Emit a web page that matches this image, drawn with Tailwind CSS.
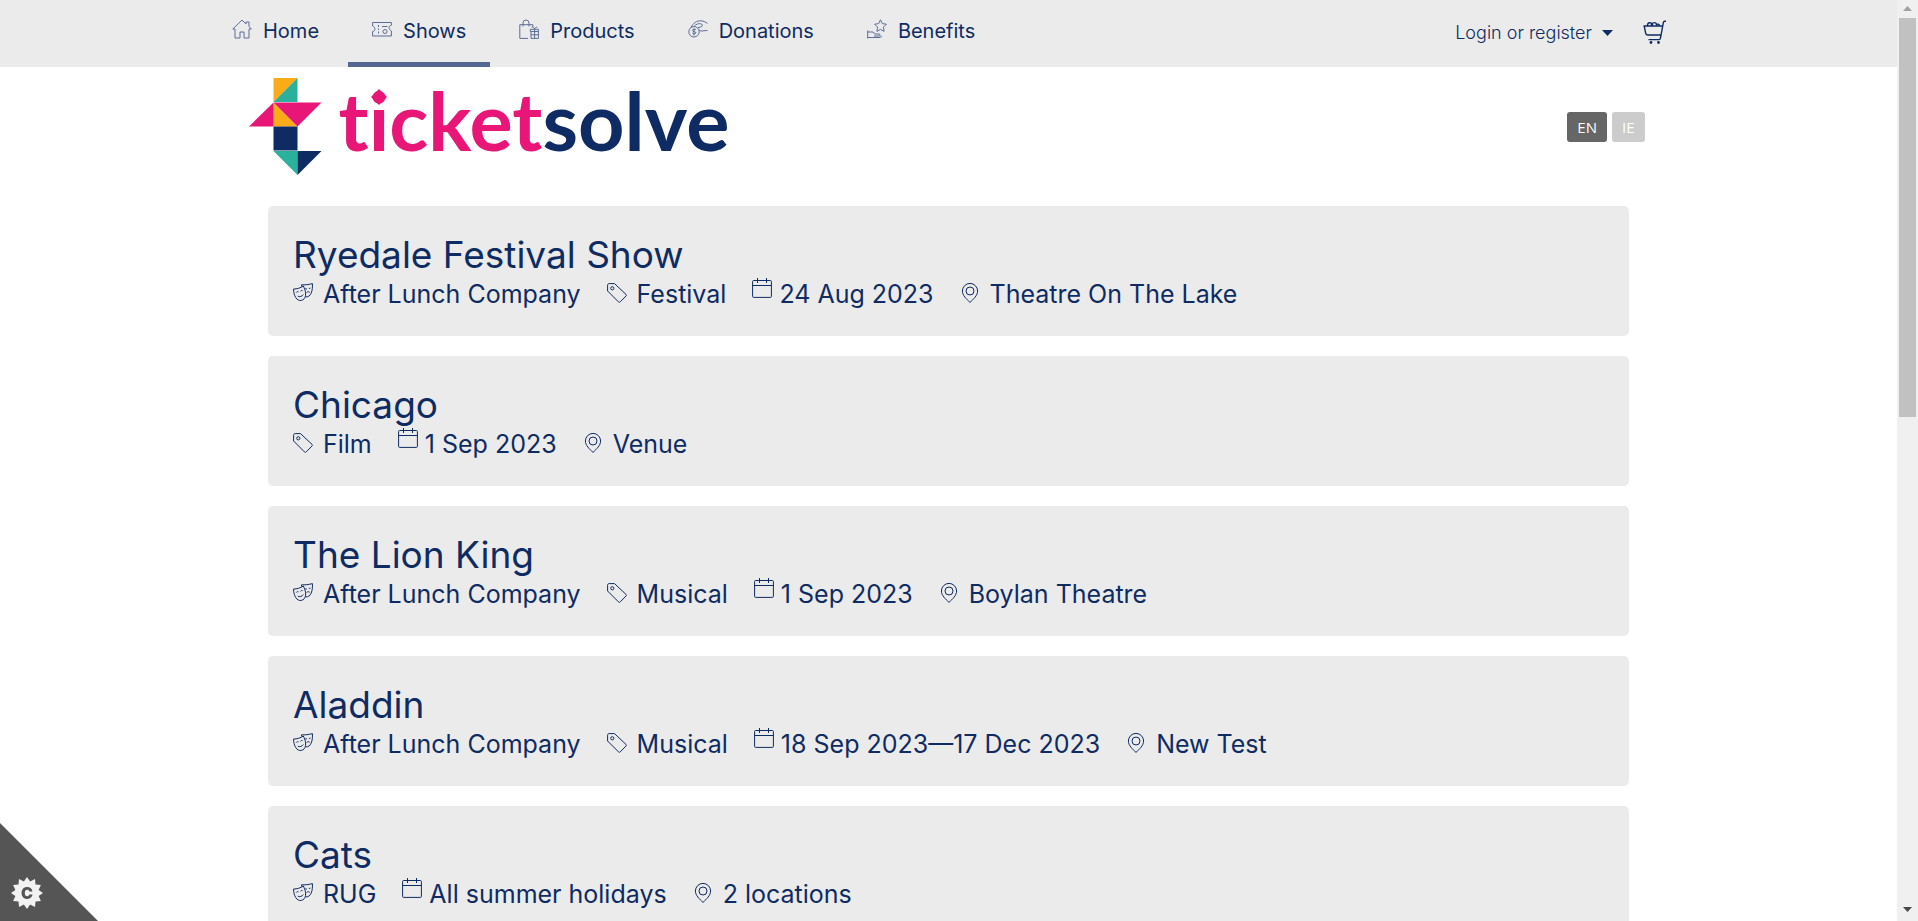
<!DOCTYPE html>
<html lang="en">
<head>
    <meta charset="UTF-8">
    <meta name="viewport" content="width=device-width, initial-scale=1.0">
    <title>Ticketsolve - Shows</title>
    <script src="https://cdn.jsdelivr.net/npm/@tailwindcss/browser@4"></script>
</head>
<body class="h-screen overflow-hidden flex bg-white text-[#0f2b63] font-['Inter','Liberation_Sans',sans-serif]">

    <!-- Icon definitions -->
    <svg class="hidden" xmlns="http://www.w3.org/2000/svg">
        <symbol id="home" viewBox="0 0 20 20"><path d="M3 10v9h5v-6h4v6h5v-9h2.300L17 7.500V3h-3v2L10 1 .8 10z"/></symbol>
        <symbol id="ticket" viewBox="0 0 20 20"><path d="M.6 3.500h18.800v2.800c-1.500.2-2.300 1.200-2.300 2.300s.8 2.700 2.300 3.400V17H.6v-4.500c1.500-.3 2.300-1 2.300-2.300S2.100 7.500.6 7z"/><path d="M6.500 6v2M6.500 9.500v1.500M6.500 12.500v2M10 7.500h5.500"/><circle cx="13" cy="12.500" r="2"/></symbol>
        <symbol id="bag" viewBox="0 0 20 20"><path d="M9 19.400H.8V5.700h13V8M4 7.500V4a3 3 0 0 1 6 0v3.500M12 12.500h7.400v6.900H12zM11.300 10.300h8.100v2.200h-8.100zM15.600 10.300v9M12 15.800h7.400M15.600 10c-1-2-2.300-2.500-2.600-1.500M15.600 10c1-2 2.300-2.500 2.600-1.500"/></symbol>
        <symbol id="coin" viewBox="0 0 20 20"><circle cx="6" cy="12.800" r="5.200"/><path d="M8 11c-.5-1-3.600-1-3.600.4 0 1.600 3.600.9 3.600 2.500 0 1.300-3.300 1.300-3.700.2M6 9.400v7M3 8.500C5 4 9 1.500 13 1.800c3 .2 4.500 1.500 6.500 2.600M6 7.500C8 5 11 4 13.500 5c1.500.8.8 3-.8 3L10 8.500M11 11c2 2 5.500.3 8.500.5"/></symbol>
        <symbol id="benefit" viewBox="0 0 20 20"><path d="M13.500.8l1.800 3.800 4.100.6-3 3 .7 4.200-3.600-2-3.600 2 .7-4.200-3-3 4.100-.6zM.7 11.500v8M.7 13h5.500l1.600 2H12c1.500 0 1.500 2 0 2H7M.7 18.500H13l2-1.500"/></symbol>
        <symbol id="cart" viewBox="0 0 24 24"><path d="M23 1.200h-1.400c-.8 0-1 .4-1.200 1.200l-3 16c-.2 1-.6 1.200-1.400 1.200H5.500M19.600 6H1.200l1.500 7.300c.3 1.400 1 1.700 2.200 1.700H18M4.500 5.500c0-3.500 4-3.500 4.500-1C10 2 13 2 13.500 4.500c2-1 3 0 3 1.500M8 6c0-1.500 1-2 2-1"/><circle cx="8" cy="22.500" r=".7"/><circle cx="15.500" cy="22.500" r=".7"/></symbol>
        <symbol id="masks" viewBox="0 0 20 20"><path d="M.6 6C4 6 7.500 5 10.300 3c1.500 2.800 2.600 6 2.300 9.300-.3 2.800-2 4.700-4.300 5.100-2.200.4-4.300-.6-5.600-2.900C1.200 12 .5 9 .6 6z"/><path d="M8.500 3.400V1.800C12 2 15.500 1.700 19.400.6c.2 3.400 0 6.600-1.200 9.500-1.100 2.600-3 4.100-5.500 3.700"/><path d="M3.300 9.500c.6-.9 1.400-1.100 2.200-.6M7.500 8.400c.5-.9 1.200-1.200 2-.8M4.800 13.200c2 1 4.200.3 5.500-1.700M12.200 5.700c.6.5 1.300.5 1.800 0M15.800 5.200c.5.4 1.200.4 1.700-.1M13.600 9.500c1.100-1 2.200-1 3.100-.2"/></symbol>
        <symbol id="tag" viewBox="0 0 20 20"><path d="M.6 2.200C.6 1 1.200.6 2.200.6h5.300L19 11.400c.6.600.6 1 0 1.600l-5.700 5.800c-.7.700-1.200.7-1.900 0L.6 8z"/><circle cx="5.300" cy="5.300" r="1.600"/></symbol>
        <symbol id="calendar" viewBox="0 0 20 20"><path d="M1.600 2.500h16.800c.7 0 1 .4 1 1v14.900c0 .7-.3 1-1 1H1.600c-.7 0-1-.3-1-1V3.500c0-.6.300-1 1-1zM.6 7.500h18.800M5.500 0v5M14.500 0v5"/></symbol>
        <symbol id="pin" viewBox="0 0 20 20"><path d="M10 19.400C6.500 16 2.400 12.500 2.400 8a7.600 7.600 0 0 1 15.200 0c0 4.500-4.100 8-7.600 11.400z"/><circle cx="10" cy="8" r="4"/></symbol>
    </svg>

    <div class="flex-1 min-w-0 overflow-hidden">
        <!-- Top navigation -->
        <header class="bg-[#ebebeb]">
            <div class="max-w-[1481px] mx-auto flex justify-between h-[67px]">
                <nav class="flex gap-[5px] text-[20px] leading-[24px]">
                    <a href="#" class="flex gap-[11px] px-6 pt-[19px]"><svg class="size-5 fill-none stroke-[#5c6d97]"><use href="#home"/></svg>Home</a>
                    <a href="#" class="flex gap-[11px] px-6 pt-[19px] border-b-5 border-[#546891]"><svg class="size-5 fill-none stroke-[#5c6d97]"><use href="#ticket"/></svg>Shows</a>
                    <a href="#" class="flex gap-[11px] px-6 pt-[19px]"><svg class="size-5 fill-none stroke-[#5c6d97]"><use href="#bag"/></svg>Products</a>
                    <a href="#" class="flex gap-[11px] px-6 pt-[19px]"><svg class="size-5 fill-none stroke-[#5c6d97]"><use href="#coin"/></svg>Donations</a>
                    <a href="#" class="flex gap-[11px] px-6 pt-[19px]"><svg class="size-5 fill-none stroke-[#5c6d97]"><use href="#benefit"/></svg>Benefits</a>
                </nav>
                <div class="flex items-start pr-[22px]">
                    <button class="flex items-center gap-[10px] pt-[21px] text-[18px] leading-[24px] font-light">Login or register
                        <svg class="w-[11px] h-[6px] fill-[#0f2b63]" viewBox="0 0 11 6"><path d="M0 0h11L5.500 6z"/></svg>
                    </button>
                    <a href="#" aria-label="Basket" class="pt-5 pl-[30px]"><svg class="size-6 fill-none stroke-[#0f2b63] stroke-[1.4]"><use href="#cart"/></svg></a>
                </div>
            </div>
        </header>

        <!-- Logo and language switch -->
        <div class="max-w-[1400px] mx-auto flex justify-between pt-[11px] pb-[31px]">
            <a href="#" class="flex gap-4">
                <svg class="w-[74px] h-[97px]" viewBox="0 0 74 97">
                    <path fill="#faab18" d="M24.500 0h24L24.500 24zM24.500 24.500l24 24h-24z"/>
                    <path fill="#2bb09c" d="M48.500 0v24h-24zM24.500 73h24v24z"/>
                    <path fill="#e81777" d="M24.500 24.500v24H0zM24.500 24.500h48l-24 24z"/>
                    <path fill="#0f2b63" d="M24.500 48.500h24v24h-24zM48.500 73h24l-24 24z"/>
                </svg>
                <span class="relative font-['Lato','Liberation_Sans',sans-serif] font-bold text-[81px] leading-[84px] text-[#e81777] [font-variant-ligatures:none]">ticket<span class="text-[#0f2b63]">solve</span>
                    <svg class="absolute left-[32px] top-[11px] size-4 fill-[#e81777]" viewBox="0 0 16 16"><path d="M8 0l8 8-8 8-8-8z"/></svg>
                </span>
            </a>
            <div class="flex gap-[5px] pt-[34px] pr-1 text-white text-[15px] leading-[30px] font-medium font-['Open_Sans','Liberation_Sans',sans-serif]">
                <button class="h-[30px] px-[10px] rounded-[3px] bg-[#666]">EN</button>
                <button class="h-[30px] px-[10px] rounded-[3px] bg-[#ccc]">IE</button>
            </div>
        </div>

        <!-- Show list -->
        <main id="shows" class="max-w-[1361px] mx-auto flex flex-col gap-5"></main>
    </div>

    <!-- Scrollbar -->
    <div class="w-[21px] shrink-0 bg-[#f0f0f0] flex flex-col items-center justify-between pt-[6px] pb-[9px]">
        <div class="flex flex-col items-center gap-[7px] w-full">
            <svg class="w-[9px] h-[5px] fill-[#a0a0a0]" viewBox="0 0 9 5"><path d="M0 5h9L4.500 0z"/></svg>
            <div class="w-[17px] h-[399px] bg-[#c1c1c1]"></div>
        </div>
        <svg class="w-[9px] h-[5px] fill-[#484848]" viewBox="0 0 9 5"><path d="M0 0h9L4.500 5z"/></svg>
    </div>

    <!-- Cookie control -->
    <button aria-label="Cookie settings" class="fixed left-0 bottom-0">
        <svg class="size-[98px]" viewBox="0 0 98 98">
            <path fill="#555" d="M0 0l98 98H0z"/>
            <polygon id="gear" fill="#f2f2f2"/>
            <text x="27" y="76" text-anchor="middle" fill="#555" class="font-['Inter','Liberation_Sans',sans-serif] font-black text-[16px]">C</text>
        </svg>
    </button>

    <script>
        const shows = [
            { title: 'Ryedale Festival Show', meta: [['masks', 'After Lunch Company'], ['tag', 'Festival'], ['calendar', '24 Aug 2023'], ['pin', 'Theatre On The Lake']] },
            { title: 'Chicago', meta: [['tag', 'Film'], ['calendar', '1 Sep 2023'], ['pin', 'Venue']] },
            { title: 'The Lion King', meta: [['masks', 'After Lunch Company'], ['tag', 'Musical'], ['calendar', '1 Sep 2023'], ['pin', 'Boylan Theatre']] },
            { title: 'Aladdin', meta: [['masks', 'After Lunch Company'], ['tag', 'Musical'], ['calendar', '18 Sep 2023—17 Dec 2023'], ['pin', 'New Test']] },
            { title: 'Cats', meta: [['masks', 'RUG'], ['calendar', 'All summer holidays'], ['pin', '2 locations']] }
        ];

        // The calendar icon sits higher and closer to its text
        document.getElementById('shows').innerHTML = shows.map(show => `
            <a href="#" class="block rounded-[5px] bg-[#ebebeb] px-[25px] pt-[29px] pb-[27px]">
                <h2 class="text-[37px] leading-[40px]">${show.title}</h2>
                <div class="flex gap-[26px] pt-[3px] text-[25px] leading-[30px]">
                    ${show.meta.map(([icon, text]) => `
                        <span class="flex ${icon === 'calendar' ? 'gap-[7px]' : 'gap-[10px]'}">
                            <svg class="size-5 fill-none stroke-[#0f2b63] ${icon === 'calendar' ? '' : 'mt-[5px]'}"><use href="#${icon}"/></svg>
                            <span class="pt-px">${text}</span>
                        </span>`).join('')}
                </div>
            </a>`).join('');

        // Twelve-pointed gear outline
        const points = [];
        for (let i = 0; i < 24; i++) {
            const r = i % 2 ? 12 : 16;
            const a = i * Math.PI / 12;
            points.push((27 + r * Math.cos(a)).toFixed(1) + ',' + (70 + r * Math.sin(a)).toFixed(1));
        }
        document.getElementById('gear').setAttribute('points', points.join(' '));
    </script>
</body>
</html>
